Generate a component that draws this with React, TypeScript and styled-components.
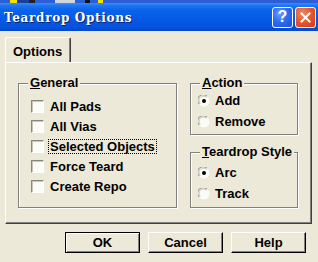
import React from 'react';
import styled, { createGlobalStyle } from 'styled-components';

const GlobalStyle = createGlobalStyle`
  html, body {
    margin: 0;
    padding: 0;
    background: #ece9d8;
  }
  body {
    font-family: "Liberation Sans", Arial, sans-serif;
  }
`;

const Window = styled.div`
  width: 318px;
  height: 262px;
  display: flex;
  flex-direction: column;
  background: #ece9d8;
  overflow: hidden;
`;

// cut-off desktop pixels above the caption
const DesktopStrip = styled.div`
  height: 3px;
  background: linear-gradient(
    90deg,
    #2a5fd8 0 10px,
    #f2e200 10px 17px,
    #1c3f9a 17px 29px,
    #222 29px 35px,
    #2a5fd8 35px 55px,
    #d0d4dc 55px 75px,
    #2a5fd8 75px 85px,
    #111 85px 90px,
    #2a5fd8 90px 98px,
    #f2e200 98px 103px,
    #2a5fd8 103px
  );
`;

const TitleBar = styled.div`
  height: 28px;
  display: flex;
  align-items: center;
  padding: 0 2px 0 4px;
  background: linear-gradient(
    180deg,
    #3d8cf5 0%,
    #1c74f2 10%,
    #0a63ea 25%,
    #0558e6 60%,
    #0553df 85%,
    #0348c8 100%
  );
`;

const Title = styled.span`
  flex: 1;
  color: #fff;
  font-family: "DejaVu Serif", "Liberation Serif", serif;
  font-weight: bold;
  font-size: 12px;
  letter-spacing: 0.7px;
  text-shadow: 1px 1px 0 #0a246a;
  margin-top: 1px;
`;

const CaptionButton = styled.div<{ $variant: 'help' | 'close' }>`
  width: 19px;
  height: 19px;
  margin-left: 2px;
  border: 1px solid #fff;
  border-radius: 3px;
  display: flex;
  align-items: center;
  justify-content: center;
  color: #fff;
  font-family: "Liberation Sans", Arial, sans-serif;
  font-weight: bold;
  font-size: 16px;
  line-height: 1;
  background: ${(p) =>
    p.$variant === 'close'
      ? 'radial-gradient(circle at 35% 30%, #f08a6a 0%, #e35a32 45%, #c93d18 100%)'
      : 'radial-gradient(circle at 35% 30%, #6a9cff 0%, #2d6cf0 45%, #1a50d8 100%)'};
`;

const Body = styled.div`
  flex: 1;
  display: flex;
  flex-direction: column;
  padding: 6px 0 0 5px;
`;

const TabRow = styled.div`
  display: flex;
  height: 25px;
`;

const Tab = styled.div`
  position: relative;
  z-index: 1;
  width: 66px;
  height: 25px;
  margin-bottom: -1px;
  box-sizing: border-box;
  border-top: 1px solid #fff;
  border-left: 1px solid #fff;
  border-right: 1px solid #404040;
  border-radius: 2px 2px 0 0;
  box-shadow: inset -1px 0 0 #808080;
  background: #ece9d8;
  padding: 6px 0 0 7px;
  font-weight: bold;
  font-size: 13px;
  color: #000;
`;

const Panel = styled.div`
  width: 307px;
  height: 162px;
  box-sizing: border-box;
  border-top: 1px solid #fff;
  border-left: 1px solid #fff;
  border-right: 1px solid #404040;
  border-bottom: 1px solid #404040;
  box-shadow: inset -1px -1px 0 #808080;
  padding: 20px 0 0 12px;
  display: grid;
  grid-template-columns: 159px 108px;
  column-gap: 13px;
  align-items: start;
`;

const Column = styled.div`
  display: flex;
  flex-direction: column;
  gap: 17px;
`;

const GroupBox = styled.div<{ $padTop: number; $padBottom: number; $padLeft: number }>`
  position: relative;
  border: 1px solid #808080;
  box-shadow: inset 1px 1px 0 #fff, 1px 1px 0 #fff;
  padding: ${(p) => `${p.$padTop}px 0 ${p.$padBottom}px ${p.$padLeft}px`};
  display: flex;
  flex-direction: column;
`;

const Legend = styled.span`
  position: absolute;
  top: -8px;
  left: 9px;
  padding: 0 2px;
  background: #ece9d8;
  font-weight: bold;
  font-size: 13px;
  line-height: 14px;
  color: #000;
`;

const Row = styled.label<{ $height: number; $gap: number }>`
  height: ${(p) => p.$height}px;
  display: flex;
  align-items: center;
  gap: ${(p) => p.$gap}px;
  font-weight: bold;
  font-size: 13px;
  color: #000;
`;

const CheckBox = styled.span`
  width: 13px;
  height: 13px;
  box-sizing: border-box;
  border-top: 1px solid #8a877c;
  border-left: 1px solid #8a877c;
  border-bottom: 1px solid #fff;
  border-right: 1px solid #fff;
  box-shadow: inset 1px 1px 0 #c9c6b8;
  background: #fbfbf8;
  flex-shrink: 0;
`;

const RowText = styled.span<{ $focused?: boolean }>`
  padding: 0 1px;
  outline: ${(p) => (p.$focused ? '1px dotted #000' : 'none')};
  line-height: 13px;
`;

const ButtonRow = styled.div`
  display: flex;
  justify-content: flex-end;
  gap: 8px;
  width: 307px;
  padding-right: 6px;
  box-sizing: border-box;
  margin-top: 8px;
`;

const DialogButton = styled.button<{ $default?: boolean }>`
  width: 75px;
  height: 21px;
  box-sizing: border-box;
  padding: 0;
  background: #ece9d8;
  font-family: "Liberation Sans", Arial, sans-serif;
  font-weight: bold;
  font-size: 13px;
  color: #000;
  border-top: 1px solid ${(p) => (p.$default ? '#000' : '#fff')};
  border-left: 1px solid ${(p) => (p.$default ? '#000' : '#fff')};
  border-right: 1px solid #000;
  border-bottom: 1px solid #000;
  box-shadow: ${(p) =>
    p.$default
      ? 'inset 1px 1px 0 #fff, inset -1px -1px 0 #808080'
      : 'inset -1px -1px 0 #808080'};
`;

const Radio: React.FC<{ checked?: boolean }> = ({ checked }) => (
  <svg width="12" height="12" viewBox="0 0 12 12" style={{ flexShrink: 0 }}>
    <circle cx="6" cy="6" r="5.5" fill="#fbfbf8" />
    <path d="M1.2 9 A5.3 5.3 0 0 1 9 1.2" stroke="#8a877c" strokeWidth="1" fill="none" />
    <path d="M2.3 8.5 A4.2 4.2 0 0 1 8.5 2.3" stroke="#c9c6b8" strokeWidth="1" fill="none" />
    {checked && <circle cx="6" cy="6" r="2" fill="#000" />}
  </svg>
);

const generalItems = ['All Pads', 'All Vias', 'Selected Objects', 'Force Teard', 'Create Repo'];

const App: React.FC = () => {
  return (
    <Window>
      <GlobalStyle />
      <DesktopStrip />
      <TitleBar>
        <Title>Teardrop Options</Title>
        <CaptionButton $variant="help">?</CaptionButton>
        <CaptionButton $variant="close">
          <svg width="11" height="11" viewBox="0 0 11 11">
            <path d="M1.5 1.5 L9.5 9.5 M9.5 1.5 L1.5 9.5" stroke="#fff" strokeWidth="2" strokeLinecap="square" />
          </svg>
        </CaptionButton>
      </TitleBar>

      <Body>
        <TabRow>
          <Tab>Options</Tab>
        </TabRow>

        <Panel>
          <GroupBox $padTop={12} $padBottom={11} $padLeft={12}>
            <Legend><u>G</u>eneral</Legend>
            {generalItems.map((item) => (
              <Row key={item} $height={20} $gap={5}>
                <CheckBox />
                <RowText $focused={item === 'Selected Objects'}>{item}</RowText>
              </Row>
            ))}
          </GroupBox>

          <Column>
            <GroupBox $padTop={6} $padBottom={2} $padLeft={7}>
              <Legend><u>A</u>ction</Legend>
              <Row $height={21} $gap={4}>
                <Radio checked />
                <RowText>Add</RowText>
              </Row>
              <Row $height={21} $gap={4}>
                <Radio />
                <RowText>Remove</RowText>
              </Row>
            </GroupBox>

            <GroupBox $padTop={9} $padBottom={3} $padLeft={7}>
              <Legend><u>T</u>eardrop Style</Legend>
              <Row $height={21} $gap={4}>
                <Radio checked />
                <RowText>Arc</RowText>
              </Row>
              <Row $height={21} $gap={4}>
                <Radio />
                <RowText>Track</RowText>
              </Row>
            </GroupBox>
          </Column>
        </Panel>

        <ButtonRow>
          <DialogButton $default>OK</DialogButton>
          <DialogButton>Cancel</DialogButton>
          <DialogButton>Help</DialogButton>
        </ButtonRow>
      </Body>
    </Window>
  );
};

export default App;
